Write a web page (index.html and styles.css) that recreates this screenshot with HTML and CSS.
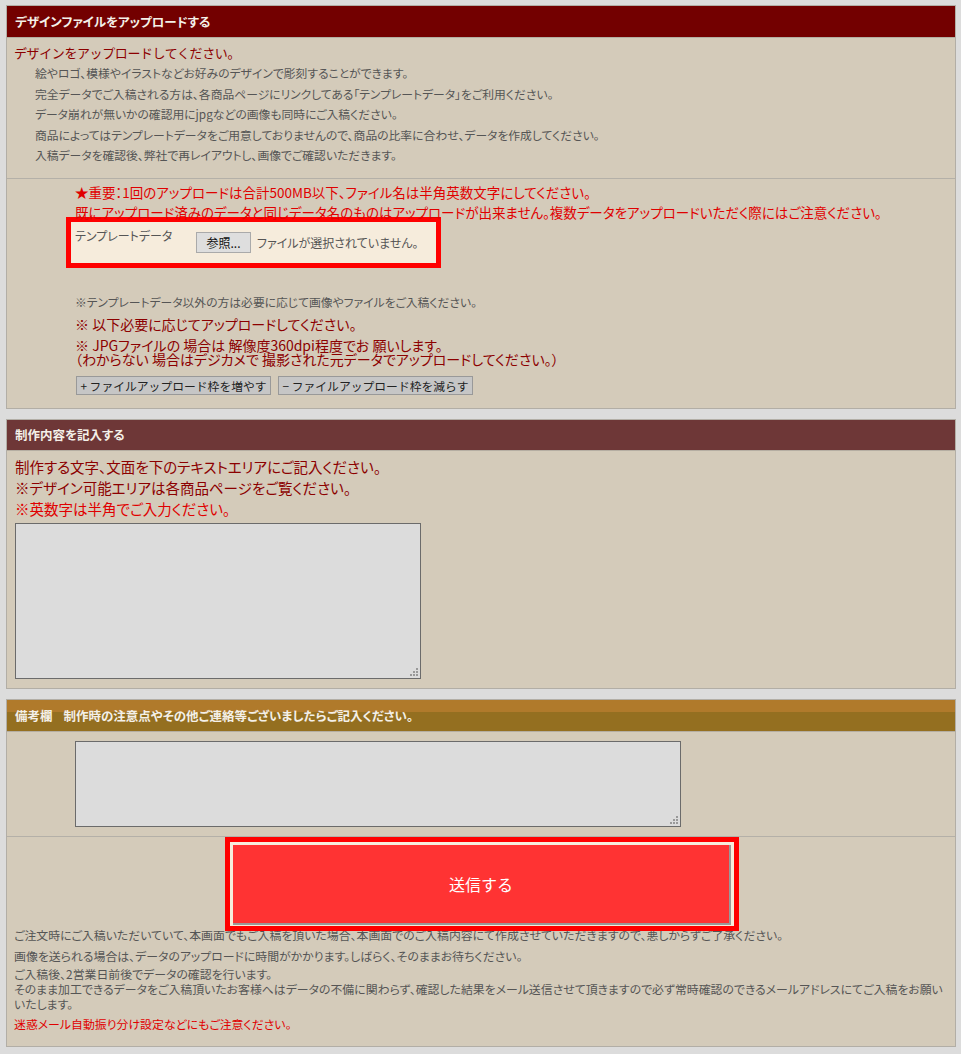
FILE: index.html
```html
<!DOCTYPE html>
<html lang="ja">
<head>
    <meta charset="UTF-8">
    <meta name="viewport" content="width=device-width, initial-scale=1.0">
    <title>デザインファイルをアップロードする</title>
    <link rel="stylesheet" href="styles.css">
</head>
<body>
    <div class="panel">
        <div class="panel-head head-upload">デザインファイルをアップロードする</div>
        <div class="intro">
            <p class="lead">デザインをアップロードしてください。</p>
            <p class="gray">絵やロゴ、模様やイラストなどお好みのデザインで彫刻することができます。</p>
            <p class="gray">完全データでご入稿される方は、各商品ページにリンクしてある「テンプレートデータ」をご利用ください。</p>
            <p class="gray">データ崩れが無いかの確認用にjpgなどの画像も同時にご入稿ください。</p>
            <p class="gray">商品によってはテンプレートデータをご用意しておりませんので、商品の比率に合わせ、データを作成してください。</p>
            <p class="gray">入稿データを確認後、弊社で再レイアウトし、画像でご確認いただきます。</p>
        </div>
        <div class="upload">
            <p class="alert">★重要：1回のアップロードは合計500MB以下、ファイル名は半角英数文字にしてください。</p>
            <p class="alert">既にアップロード済みのデータと同じデータ名のものはアップロードが出来ません。複数データをアップロードいただく際にはご注意ください。</p>
            <div class="file-box">
                <span class="file-label">テンプレートデータ</span>
                <div class="file-field">
                    <button type="button" class="browse">参照...</button>
                    <span class="file-name">ファイルが選択されていません。</span>
                </div>
            </div>
            <p class="note">※テンプレートデータ以外の方は必要に応じて画像やファイルをご入稿ください。</p>
            <p class="dark">※ 以下必要に応じてアップロードしてください。</p>
            <p class="dark tight">※ JPGファイルの 場合は 解像度360dpi程度でお 願いします。</p>
            <p class="dark tight">（わからない 場合はデジカメで 撮影された元データでアップロードしてください。）</p>
            <div class="frame-buttons">
                <button type="button" class="frame-btn">+ ファイルアップロード枠を増やす</button>
                <button type="button" class="frame-btn">− ファイルアップロード枠を減らす</button>
            </div>
        </div>
    </div>

    <div class="panel">
        <div class="panel-head head-content">制作内容を記入する</div>
        <div class="content">
            <p class="dark big">制作する文字、文面を下のテキストエリアにご記入ください。</p>
            <p class="dark big">※デザイン可能エリアは各商品ページをご覧ください。</p>
            <p class="red big">※英数字は半角でご入力ください。</p>
            <textarea class="text-main"></textarea>
        </div>
    </div>

    <div class="panel">
        <div class="panel-head head-memo">備考欄<span class="head-gap"></span>制作時の注意点やその他ご連絡等ございましたらご記入ください。</div>
        <div class="memo">
            <textarea class="text-memo"></textarea>
        </div>
        <div class="send">
            <div class="send-frame">
                <button type="button" class="send-btn">送信する</button>
            </div>
        </div>
        <div class="notes">
            <p>ご注文時にご入稿いただいていて、本画面でもご入稿を頂いた場合、本画面でのご入稿内容にて作成させていただきますので、悪しからずご了承ください。</p>
            <p class="gap6">画像を送られる場合は、データのアップロードに時間がかかります。しばらく、そのままお待ちください。</p>
            <p class="gap3">ご入稿後、2営業日前後でデータの確認を行います。</p>
            <p>そのまま加工できるデータをご入稿頂いたお客様へはデータの不備に関わらず、確認した結果をメール送信させて頂きますので必ず常時確認のできるメールアドレスにてご入稿をお願いいたします。</p>
            <p class="gap5 red">迷惑メール自動振り分け設定などにもご注意ください。</p>
        </div>
    </div>
</body>
</html>
```

FILE: styles.css
```css
body {
    margin: 5px 0 0 6px;
    background: #dcdcdc;
    font-family: "Noto Sans CJK JP", "Liberation Sans", sans-serif;
    font-feature-settings: "palt";
    color: #555;
}
p {
    margin: 0;
}
.panel {
    width: 950px;
    box-sizing: border-box;
    background: #d4cbba;
    border: 1px solid #b2aea6;
    margin-bottom: 10px;
}
.panel-head {
    height: 31px;
    display: flex;
    align-items: center;
    padding-left: 8px;
    color: #f4f0e8;
    font-size: 12.5px;
    font-weight: bold;
    border-bottom: 1px solid #b5aea2;
}
.head-upload {
    background: #730000;
}
.head-content {
    height: 30px;
    background: #6e3737;
}
.head-memo {
    background: linear-gradient(#b07a2b 0, #b07a2b 12px, #946f20 12px);
}
.head-gap {
    width: 11px;
}
.intro {
    padding: 5px 7px 12px;
    border-bottom: 1px solid #b4b0a8;
}
.lead {
    color: #8c0000;
    font-size: 13px;
    font-feature-settings: normal;
    letter-spacing: -0.4px;
    line-height: 20px;
}
.gray {
    padding-left: 21px;
    font-size: 11.8px;
    line-height: 20.5px;
}
.upload {
    padding: 5px 0 13px 68px;
}
.alert {
    color: #e00000;
    font-size: 13.5px;
    line-height: 16px;
    margin-bottom: 4px;
}
.file-box {
    display: flex;
    width: 375px;
    height: 51px;
    box-sizing: border-box;
    margin: -7px 0 0 -9px;
    padding: 6px 4px 4px;
    border: 5px solid #f00;
    background: #f6ecdc;
}
.file-label {
    width: 121px;
    font-size: 12px;
    line-height: 16px;
}
.file-field {
    display: flex;
    align-items: center;
    gap: 6px;
    margin-top: 4px;
    align-self: flex-start;
}
.browse {
    width: 55px;
    height: 21px;
    padding: 0;
    border: 1px solid #aaa;
    background: #dedede;
    color: #111;
    font-family: inherit;
    font-size: 12px;
}
.file-name {
    font-size: 12px;
}
.note {
    margin-top: 26px;
    font-size: 11.8px;
    line-height: 16px;
}
.dark {
    color: #8c0000;
    font-size: 14px;
    line-height: 18px;
    margin-top: 5px;
}
.dark.tight {
    line-height: 14px;
}
.dark.tight + .tight {
    margin-top: 0;
}
.frame-buttons {
    display: flex;
    gap: 7px;
    margin-top: 10px;
    padding-left: 1px;
}
.frame-btn {
    width: 195px;
    height: 19px;
    padding: 0;
    border: 1px solid #999;
    background: #c6c6c6;
    color: #222;
    font-family: inherit;
    font-size: 11.8px;
    line-height: 17px;
    white-space: nowrap;
}
.content {
    padding: 5px 7px 9px 8px;
}
.big {
    font-size: 14.5px;
    line-height: 21px;
    margin: 0;
}
.red {
    color: #e00000;
}
textarea {
    display: block;
    box-sizing: border-box;
    border: 1px solid #6b6b6b;
    background: #dcdcdc;
}
textarea::-webkit-resizer {
    background:
        linear-gradient(#999, #999) right 2px bottom 2px / 2px 2px no-repeat,
        linear-gradient(#999, #999) right 5px bottom 2px / 2px 2px no-repeat,
        linear-gradient(#999, #999) right 8px bottom 2px / 2px 2px no-repeat,
        linear-gradient(#999, #999) right 2px bottom 5px / 2px 2px no-repeat,
        linear-gradient(#999, #999) right 5px bottom 5px / 2px 2px no-repeat,
        linear-gradient(#999, #999) right 2px bottom 8px / 2px 2px no-repeat;
}
.text-main {
    width: 406px;
    height: 156px;
    margin-top: 4px;
}
.memo {
    padding: 9px 0 9px 68px;
    border-bottom: 1px solid #b4b0a8;
}
.text-memo {
    width: 606px;
    height: 86px;
}
.send {
    display: flex;
    justify-content: center;
    padding-left: 2px;
}
.send-frame {
    position: relative;
    z-index: 1;
    border: 5px solid #f00;
    padding: 3px 3px 1px 3px;
    background: #f6ecdc;
    margin-bottom: -4px;
}
.send-btn {
    display: block;
    width: 498px;
    height: 80px;
    border: 0;
    border-right: 2px solid #999;
    border-bottom: 2px solid #999;
    background: #ff3333;
    color: #fff;
    font-family: inherit;
    font-size: 16px;
}
.notes {
    padding: 0 4px 15px 7px;
    font-size: 11.9px;
    line-height: 15px;
}
.gap6 {
    margin-top: 6px;
}
.gap3 {
    margin-top: 3px;
}
.gap5 {
    margin-top: 5px;
}
```
